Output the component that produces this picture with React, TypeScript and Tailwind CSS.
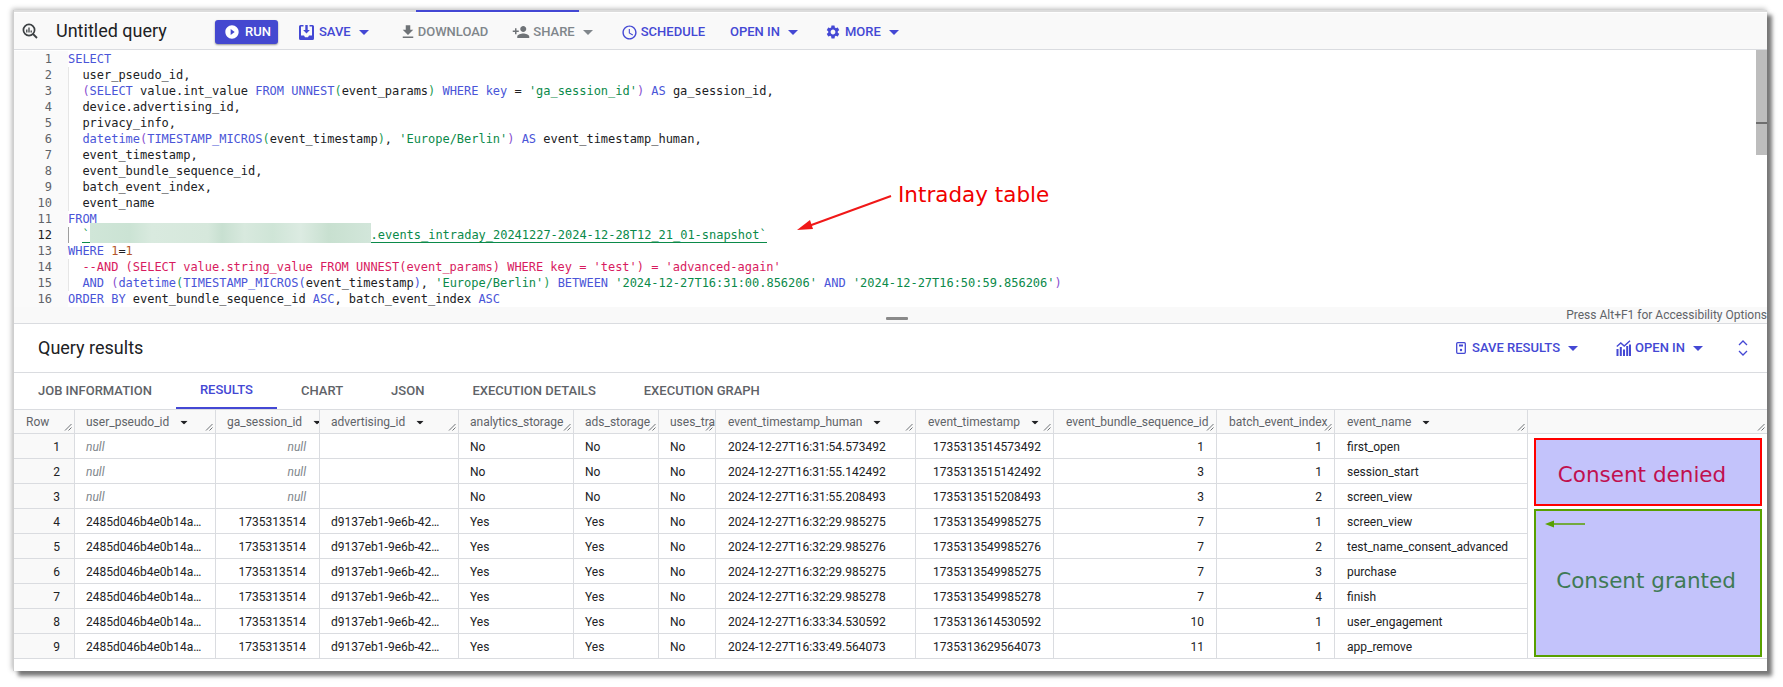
import React from "react";
import { MdFileDownload, MdPersonAdd, MdSchedule, MdSettings, MdPlayCircleFilled } from "react-icons/md";

const k = "text-[#4a55d8]";
const s = "text-[#0b8a4a]";
const d = "text-[#202124]";
const p = "text-[#8a4fd0]";
const g = "text-[#1f9d55]";
const c = "text-[#d81b60]";
const n = "text-[#b5562a]";

type Tok = [string, string];
const code: { t: Tok[]; guide?: boolean }[] = [
  { t: [["SELECT", k]] },
  { guide: true, t: [["  user_pseudo_id,", d]] },
  { guide: true, t: [["  ", d], ["(", p], ["SELECT", k], [" value.int_value ", d], ["FROM", k], [" ", d], ["UNNEST", k], ["(", g], ["event_params", d], [")", g], [" ", d], ["WHERE", k], [" ", d], ["key", k], [" = ", d], ["'ga_session_id'", s], [")", p], [" ", d], ["AS", k], [" ga_session_id,", d]] },
  { guide: true, t: [["  device.advertising_id,", d]] },
  { guide: true, t: [["  privacy_info,", d]] },
  { guide: true, t: [["  ", d], ["datetime", k], ["(", p], ["TIMESTAMP_MICROS", k], ["(", g], ["event_timestamp", d], [")", g], [", ", d], ["'Europe/Berlin'", s], [")", p], [" ", d], ["AS", k], [" event_timestamp_human,", d]] },
  { guide: true, t: [["  event_timestamp,", d]] },
  { guide: true, t: [["  event_bundle_sequence_id,", d]] },
  { guide: true, t: [["  batch_event_index,", d]] },
  { guide: true, t: [["  event_name", d]] },
  { t: [["FROM", k]] },
  { t: [] },
  { t: [["WHERE", k], [" ", d], ["1", n], ["=", d], ["1", n]] },
  { guide: true, t: [["  --AND (SELECT value.string_value FROM UNNEST(event_params) WHERE key = 'test') = 'advanced-again'", c]] },
  { guide: true, t: [["  ", d], ["AND", k], [" ", d], ["(", p], ["datetime", k], ["(", g], ["TIMESTAMP_MICROS", k], ["(", k], ["event_timestamp", d], [")", k], [", ", d], ["'Europe/Berlin'", s], [")", g], [" ", d], ["BETWEEN", k], [" ", d], ["'2024-12-27T16:31:00.856206'", s], [" ", d], ["AND", k], [" ", d], ["'2024-12-27T16:50:59.856206'", s], [")", p]] },
  { t: [["ORDER BY", k], [" event_bundle_sequence_id ", d], ["ASC", k], [", batch_event_index ", d], ["ASC", k]] },
];

const cols = "grid grid-cols-[61px_141px_104px_139px_115px_85px_57px_200px_138px_163px_118px_193px_1fr]";

const headers: [string, boolean][] = [
  ["Row", false],
  ["user_pseudo_id", true],
  ["ga_session_id", true],
  ["advertising_id", true],
  ["analytics_storage", false],
  ["ads_storage", false],
  ["uses_transient_token", false],
  ["event_timestamp_human", true],
  ["event_timestamp", true],
  ["event_bundle_sequence_id", false],
  ["batch_event_index", false],
  ["event_name", true],
  ["", false],
];

const rows = [
  ["1", "", "", "", "No", "No", "No", "2024-12-27T16:31:54.573492", "1735313514573492", "1", "1", "first_open"],
  ["2", "", "", "", "No", "No", "No", "2024-12-27T16:31:55.142492", "1735313515142492", "3", "1", "session_start"],
  ["3", "", "", "", "No", "No", "No", "2024-12-27T16:31:55.208493", "1735313515208493", "3", "2", "screen_view"],
  ["4", "2485d046b4e0b14a…", "1735313514", "d9137eb1-9e6b-42…", "Yes", "Yes", "No", "2024-12-27T16:32:29.985275", "1735313549985275", "7", "1", "screen_view"],
  ["5", "2485d046b4e0b14a…", "1735313514", "d9137eb1-9e6b-42…", "Yes", "Yes", "No", "2024-12-27T16:32:29.985276", "1735313549985276", "7", "2", "test_name_consent_advanced"],
  ["6", "2485d046b4e0b14a…", "1735313514", "d9137eb1-9e6b-42…", "Yes", "Yes", "No", "2024-12-27T16:32:29.985275", "1735313549985275", "7", "3", "purchase"],
  ["7", "2485d046b4e0b14a…", "1735313514", "d9137eb1-9e6b-42…", "Yes", "Yes", "No", "2024-12-27T16:32:29.985278", "1735313549985278", "7", "4", "finish"],
  ["8", "2485d046b4e0b14a…", "1735313514", "d9137eb1-9e6b-42…", "Yes", "Yes", "No", "2024-12-27T16:33:34.530592", "1735313614530592", "10", "1", "user_engagement"],
  ["9", "2485d046b4e0b14a…", "1735313514", "d9137eb1-9e6b-42…", "Yes", "Yes", "No", "2024-12-27T16:33:49.564073", "1735313629564073", "11", "1", "app_remove"],
];

const rightAligned = new Set([0, 2, 8, 9, 10]);

function Caret({ className = "" }: { className?: string }) {
  return (
    <svg width="10" height="5" viewBox="0 0 10 5" className={className}>
      <path d="M0 0h10L5 5z" fill="currentColor" />
    </svg>
  );
}

function Grip() {
  return (
    <svg width="8" height="8" viewBox="0 0 8 8" className="absolute right-[2px] bottom-[2px] text-[#5f6368]">
      <path d="M1 7.5 7.5 1M4.5 7.5 7.5 4.5" stroke="currentColor" strokeWidth="0.9" fill="none" />
    </svg>
  );
}

function SaveIcon() {
  return (
    <svg width="15" height="15" viewBox="0 0 15 15" className="text-[#4448d4]">
      <path d="M1.5 0h3v1.6H2v9h3l1 1.6h3l1-1.6h3v-9h-2.5V0h3A1.5 1.5 0 0 1 15 1.5v12a1.5 1.5 0 0 1-1.5 1.5h-12A1.5 1.5 0 0 1 0 13.5v-12A1.5 1.5 0 0 1 1.5 0z" fill="currentColor" />
      <path d="M6.3 0h2.4v5h2.2l-3.4 3.6L4.100 5h2.200z" fill="currentColor" />
    </svg>
  );
}

function SearchInsights() {
  return (
    <svg width="16" height="16" viewBox="0 0 16 16" className="text-[#3c4043]">
      <circle cx="7" cy="7" r="5.6" fill="none" stroke="currentColor" strokeWidth="1.7" />
      <path d="M11 11l4 4" stroke="currentColor" strokeWidth="1.8" />
      <path d="M4.800 6.500v3M7 4.500v5M9.200 7.500v2" stroke="currentColor" strokeWidth="1.3" />
    </svg>
  );
}

function SaveResultsIcon() {
  return (
    <svg width="10" height="12" viewBox="0 0 10 12" className="text-[#4448d4]">
      <rect x="0.700" y="0.700" width="8.600" height="10.600" rx="1" fill="none" stroke="currentColor" strokeWidth="1.300" />
      <path d="M3 2.500h4v2H3z" fill="currentColor" />
      <circle cx="5" cy="8" r="1.200" fill="currentColor" />
    </svg>
  );
}

function ChartIcon() {
  return (
    <svg width="15" height="16" viewBox="0 0 15 16" className="text-[#4448d4]">
      <path d="M0.500 16V9h2v7zM3.800 16V7h2v9zM7 16V9.500h2V16zM10.200 16V6h2v10zM13 16V4.500h2V16z" fill="currentColor" />
      <path d="M0.800 6.500 4.800 3l3.400 3L14 0.800" fill="none" stroke="currentColor" strokeWidth="1.400" />
    </svg>
  );
}

function ToolBtn({ children, className = "" }: { children: React.ReactNode; className?: string }) {
  return <div className={`flex items-center text-[13px] font-medium whitespace-nowrap mt-[2px] ${className}`}>{children}</div>;
}

export default function App() {
  return (
    <div className="relative w-[1783px] h-[687px] bg-white overflow-hidden font-['Roboto',sans-serif] text-[#202124]">
      <div className="ml-[13px] mt-[10px] w-[1754px] h-[661px] bg-white flex flex-col border-l border-[#cfcfcf] shadow-[5px_5px_4px_#777777,-1px_-1px_5px_#b5b5b5]">
        {/* top strip */}
        <div className="h-[3px] bg-white border-t-2 border-[#dcdcdc] flex shrink-0">
          <div className="ml-[402px] -mt-[2px] w-[163px] h-[2px] bg-[#4448d4]" />
        </div>

        {/* toolbar */}
        <div className="h-[37px] shrink-0 bg-[#f9f9f9] border-b border-[#dadce0] flex items-center">
          <div className="ml-[8px] w-[16px] flex"><SearchInsights /></div>
          <div className="ml-[18px] w-[159px] text-[18px] leading-[24px] -mt-[1px] text-[#202124]">Untitled query</div>
          <div className="w-[63px] h-[24px] mt-[1px] bg-[#4448d0] rounded-[3px] shadow-[0_1px_2px_rgba(0,0,0,0.4)] flex items-center pl-[9px] text-white text-[13px] font-medium">
            <MdPlayCircleFilled size={16} />
            <span className="ml-[5px]">RUN</span>
          </div>
          <ToolBtn className="ml-[21px] text-[#4448d4]">
            <SaveIcon />
            <span className="ml-[5px]">SAVE</span>
            <Caret className="ml-[8px]" />
          </ToolBtn>
          <ToolBtn className="ml-[31px] text-[#80868b]">
            <span className="text-[#6f7377] -ml-[1px] flex"><MdFileDownload size={18} /></span>
            <span className="ml-[1px]">DOWNLOAD</span>
          </ToolBtn>
          <ToolBtn className="ml-[24px] text-[#80868b]">
            <span className="text-[#6f7377] flex"><MdPersonAdd size={18} /></span>
            <span className="ml-[3px]">SHARE</span>
            <Caret className="ml-[8px]" />
          </ToolBtn>
          <ToolBtn className="ml-[28px] text-[#4448d4]">
            <MdSchedule size={17} />
            <span className="ml-[3px]">SCHEDULE</span>
          </ToolBtn>
          <ToolBtn className="ml-[25px] text-[#4448d4]">
            <span>OPEN IN</span>
            <Caret className="ml-[8px]" />
          </ToolBtn>
          <ToolBtn className="ml-[27px] text-[#4448d4]">
            <MdSettings size={16} />
            <span className="ml-[4px]">MORE</span>
            <Caret className="ml-[8px]" />
          </ToolBtn>
        </div>

        {/* editor */}
        <div className="relative h-[257px] shrink-0 bg-white flex pt-[1px]">
          <div className="w-[54px] bg-[#fafafa] shrink-0 font-['DejaVu_Sans_Mono',monospace] text-[12px] leading-[16px] text-[#5f6368]">
            {code.map((_, i) => (
              <div key={i} className={`h-[16px] text-right pr-[16px] ${i === 11 ? "text-[#202124]" : ""}`}>{i + 1}</div>
            ))}
          </div>
          <div className="font-['DejaVu_Sans_Mono',monospace] text-[12px] leading-[16px] tracking-[-0.025px] whitespace-pre flex-1">
            {code.map((line, i) =>
              i === 11 ? (
                <div key={i} className="h-[16px] flex shadow-[inset_1px_0_0_#9e9e9e]">
                  <span className={g}>  </span>
                  <span className={`${g} h-[16px] border-b border-[#0b8a4a]`}>`</span>
                  <span className="relative inline-block w-[281px] h-[16px]">
                    <span className="absolute left-0 -top-[4px] w-[281px] h-[20px] bg-[linear-gradient(90deg,#d0e6d8_0%,#cbe3d4_14%,#d9eadf_22%,#d6e8dc_42%,#c8e0d1_47%,#d8e9de_55%,#cfe5d7_65%,#dcebe2_75%,#c8e0d0_85%,#d2e6da_100%)]" />
                  </span>
                  <span className={`${s} h-[16px] border-b border-[#0b8a4a]`}>.events_intraday_20241227-2024-12-28T12_21_01-snapshot`</span>
                </div>
              ) : (
                <div key={i} className={`h-[16px] ${line.guide ? "shadow-[inset_1px_0_0_#e6e6e6]" : ""}`}>
                  {line.t.map((tk, j) => (
                    <span key={j} className={tk[1]}>{tk[0]}</span>
                  ))}
                </div>
              )
            )}
          </div>
          {/* scrollbar */}
          <div className="absolute right-0 top-0 w-[11px] h-[105px] bg-[#bdbdbd]">
            <div className="mt-[72px] h-[2px] bg-[#6e6e6e]" />
          </div>
        </div>

        {/* splitter */}
        <div className="relative h-[17px] shrink-0 bg-[#f9f9f9] border-b border-[#dadce0] flex items-center justify-end text-[12px] text-[#5f6368]">
          <span className="absolute left-[872px] top-[10px] w-[22px] h-[3px] rounded-[1px] bg-[#8a8a8a]" />
          <span className="whitespace-nowrap">Press Alt+F1 for Accessibility Options</span>
        </div>

        {/* results title */}
        <div className="h-[49px] shrink-0 flex items-center border-b border-[#dadce0]">
          <div className="ml-[24px] text-[18px] leading-[24px]">Query results</div>
          <div className="ml-auto flex items-center text-[#4448d4] text-[13px] font-medium pr-[19px]">
            <SaveResultsIcon />
            <span className="ml-[6px]">SAVE RESULTS</span>
            <Caret className="ml-[8px]" />
            <span className="ml-[38px] flex"><ChartIcon /></span>
            <span className="ml-[4px]">OPEN IN</span>
            <Caret className="ml-[8px]" />
            <svg width="10" height="16" viewBox="0 0 10 16" className="ml-[35px]">
              <path d="M1 5l4-4 4 4M1 11l4 4 4-4" fill="none" stroke="currentColor" strokeWidth="1.300" />
            </svg>
          </div>
        </div>

        {/* tabs */}
        <div className="h-[36px] shrink-0 flex text-[13px] font-medium text-[#5f6368]">
          {["JOB INFORMATION", "RESULTS", "CHART", "JSON", "EXECUTION DETAILS", "EXECUTION GRAPH"].map((tab) => (
            <div key={tab} className={`px-6 h-[36px] flex items-center whitespace-nowrap ${tab === "RESULTS" ? "text-[#4448d4] border-b-2 border-[#4448d4]" : ""}`}>
              {tab}
            </div>
          ))}
        </div>

        {/* table header */}
        <div className={`${cols} h-[25px] shrink-0 bg-[#f9f9f9] border-y border-[#dadce0] text-[12px] text-[#5f6368]`}>
          {headers.map(([h, sort], i) => (
            <div key={i} className={`relative flex items-center pt-[1px] overflow-hidden whitespace-nowrap ${i >= 1 && i <= 6 ? "pl-[11px]" : "pl-[12px]"} ${i < 12 ? "border-r border-[#dadce0]" : ""}`}>
              <span className="shrink-0">{h}</span>
              {sort && <Caret className="ml-[10px] shrink-0 text-[#202124] scale-75" />}
              {i !== 2 && <Grip />}
            </div>
          ))}
        </div>

        {/* table rows */}
        {rows.map((row, r) => (
          <div key={r} className={`${cols} h-[25px] shrink-0 text-[12px] text-[#202124]`}>
            {row.map((cell, i) => {
              const isNull = r < 3 && (i === 1 || i === 2);
              return (
                <div
                  key={i}
                  className={`flex items-center pt-[1px] whitespace-nowrap overflow-hidden border-r border-b border-[#dadce0] ${i >= 1 && i <= 6 ? "pl-[11px]" : "pl-[12px]"} ${i === 2 ? "pr-[13px]" : i === 0 ? "pr-[14px]" : "pr-[12px]"} ${rightAligned.has(i) ? "justify-end" : ""} ${i === 0 ? "bg-[#f9f9f9]" : ""} ${isNull ? "italic text-[#80868b]" : ""}`}
                >
                  {isNull ? "null" : cell}
                </div>
              );
            })}
            <div className={r === 8 ? "border-b border-[#dadce0]" : ""} />
          </div>
        ))}
      </div>

      {/* annotations */}
      <svg width="110" height="46" viewBox="0 0 110 46" className="absolute left-[790px] top-[190px]">
        <path d="M101 6 16 37" stroke="#f01818" strokeWidth="2" fill="none" />
        <path d="M7 40 20 30l3 9z" fill="#f01818" />
      </svg>
      <div className="absolute left-[898px] top-[180px] text-[21.5px] leading-[30px] text-[#f00000] font-['DejaVu_Sans',sans-serif] whitespace-nowrap">Intraday table</div>

      <div className="absolute left-[1534px] top-[438px] w-[228px] h-[68px] bg-[#c3c3fb] border-[2px] border-[#ff0000] flex items-center justify-center pr-[12px] pt-[6px] text-[21.5px] text-[#c0104f] font-['DejaVu_Sans',sans-serif] whitespace-nowrap">
        Consent denied
      </div>
      <div className="absolute left-[1534px] top-[509px] w-[228px] h-[148px] bg-[#c3c3fb] border-[2px] border-[#58a000] flex items-center justify-center pr-[4px] pb-[4px] text-[21.5px] text-[#3f7a55] font-['DejaVu_Sans',sans-serif] whitespace-nowrap">
        Consent granted
      </div>
      <svg width="42" height="10" viewBox="0 0 42 10" className="absolute left-[1544px] top-[519px]">
        <path d="M8 5h33" stroke="#58a000" strokeWidth="1.500" />
        <path d="M1 5l9-3.500v7z" fill="#58a000" />
      </svg>
    </div>
  );
}
